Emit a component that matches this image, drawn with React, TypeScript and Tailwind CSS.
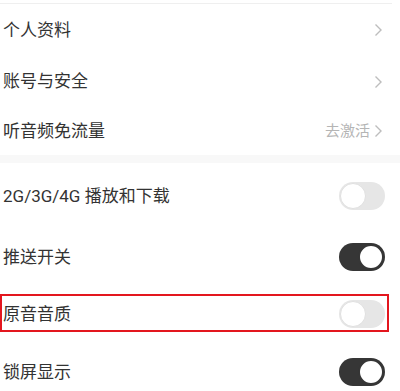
import React from "react";

const font = { fontFamily: "Roboto, 'Noto Sans CJK SC', sans-serif" };

function Chevron() {
  return (
    <svg width="9" height="14" viewBox="0 0 9 14" className="shrink-0">
      <path d="M1.5 1.5 L7 7 L1.5 12.5" fill="none" stroke="#bdbdbd" strokeWidth="1.4" />
    </svg>
  );
}

function Toggle({ on }: { on: boolean }) {
  return on ? (
    <div className="w-[46px] h-[28px] rounded-full bg-[#363636] flex items-center justify-end p-[1px]">
      <div className="w-[26px] h-[26px] rounded-full bg-white border-[2px] border-[#363636]" />
    </div>
  ) : (
    <div className="w-[46px] h-[28px] rounded-full bg-[#e6e6e6] flex items-center justify-start p-[1px]">
      <div className="w-[26px] h-[26px] rounded-full bg-white border border-[#e0e0e0]" />
    </div>
  );
}

function Row({ h, label, right, boxed }: { h: string; label: string; right: React.ReactNode; boxed?: boolean }) {
  return (
    <div className={`relative flex items-center justify-between pl-[3px] pr-[17px] ${h}`}>
      <span className="text-[17px] text-[#333] leading-none">{label}</span>
      {right}
      {boxed && (
        <div className="absolute left-0 right-[11px] top-[9px] h-[38px] border-[2px] border-[#e3161e]" />
      )}
    </div>
  );
}

export default function App() {
  return (
    <div className="w-[400px] h-[391px] bg-white overflow-hidden" style={font}>
      <div className="h-[3px]" />
      <div className="h-[1px] w-[392px] bg-[#efefef]" />
      <Row h="h-[52px]" label="个人资料" right={<Chevron />} />
      <Row h="h-[51px]" label="账号与安全" right={<Chevron />} />
      <Row
        h="h-[48px]"
        label="听音频免流量"
        right={
          <div className="flex items-center gap-[4px]">
            <span className="text-[15px] text-[#b5b5b5] leading-none">去激活</span>
            <Chevron />
          </div>
        }
      />
      <div className="h-[8px] bg-[#f8f8f8]" />
      <div>
        <Row h="h-[66px]" label="2G/3G/4G 播放和下载" right={<div className="-mr-[2px]"><Toggle on={false} /></div>} />
        <Row h="h-[56px]" label="推送开关" right={<div className="-mr-[2px]"><Toggle on /></div>} />
        <Row h="h-[58px]" label="原音音质" right={<div className="-mr-[2px]"><Toggle on={false} /></div>} boxed />
        <Row h="h-[58px]" label="锁屏显示" right={<div className="-mr-[2px]"><Toggle on /></div>} />
      </div>
    </div>
  );
}
